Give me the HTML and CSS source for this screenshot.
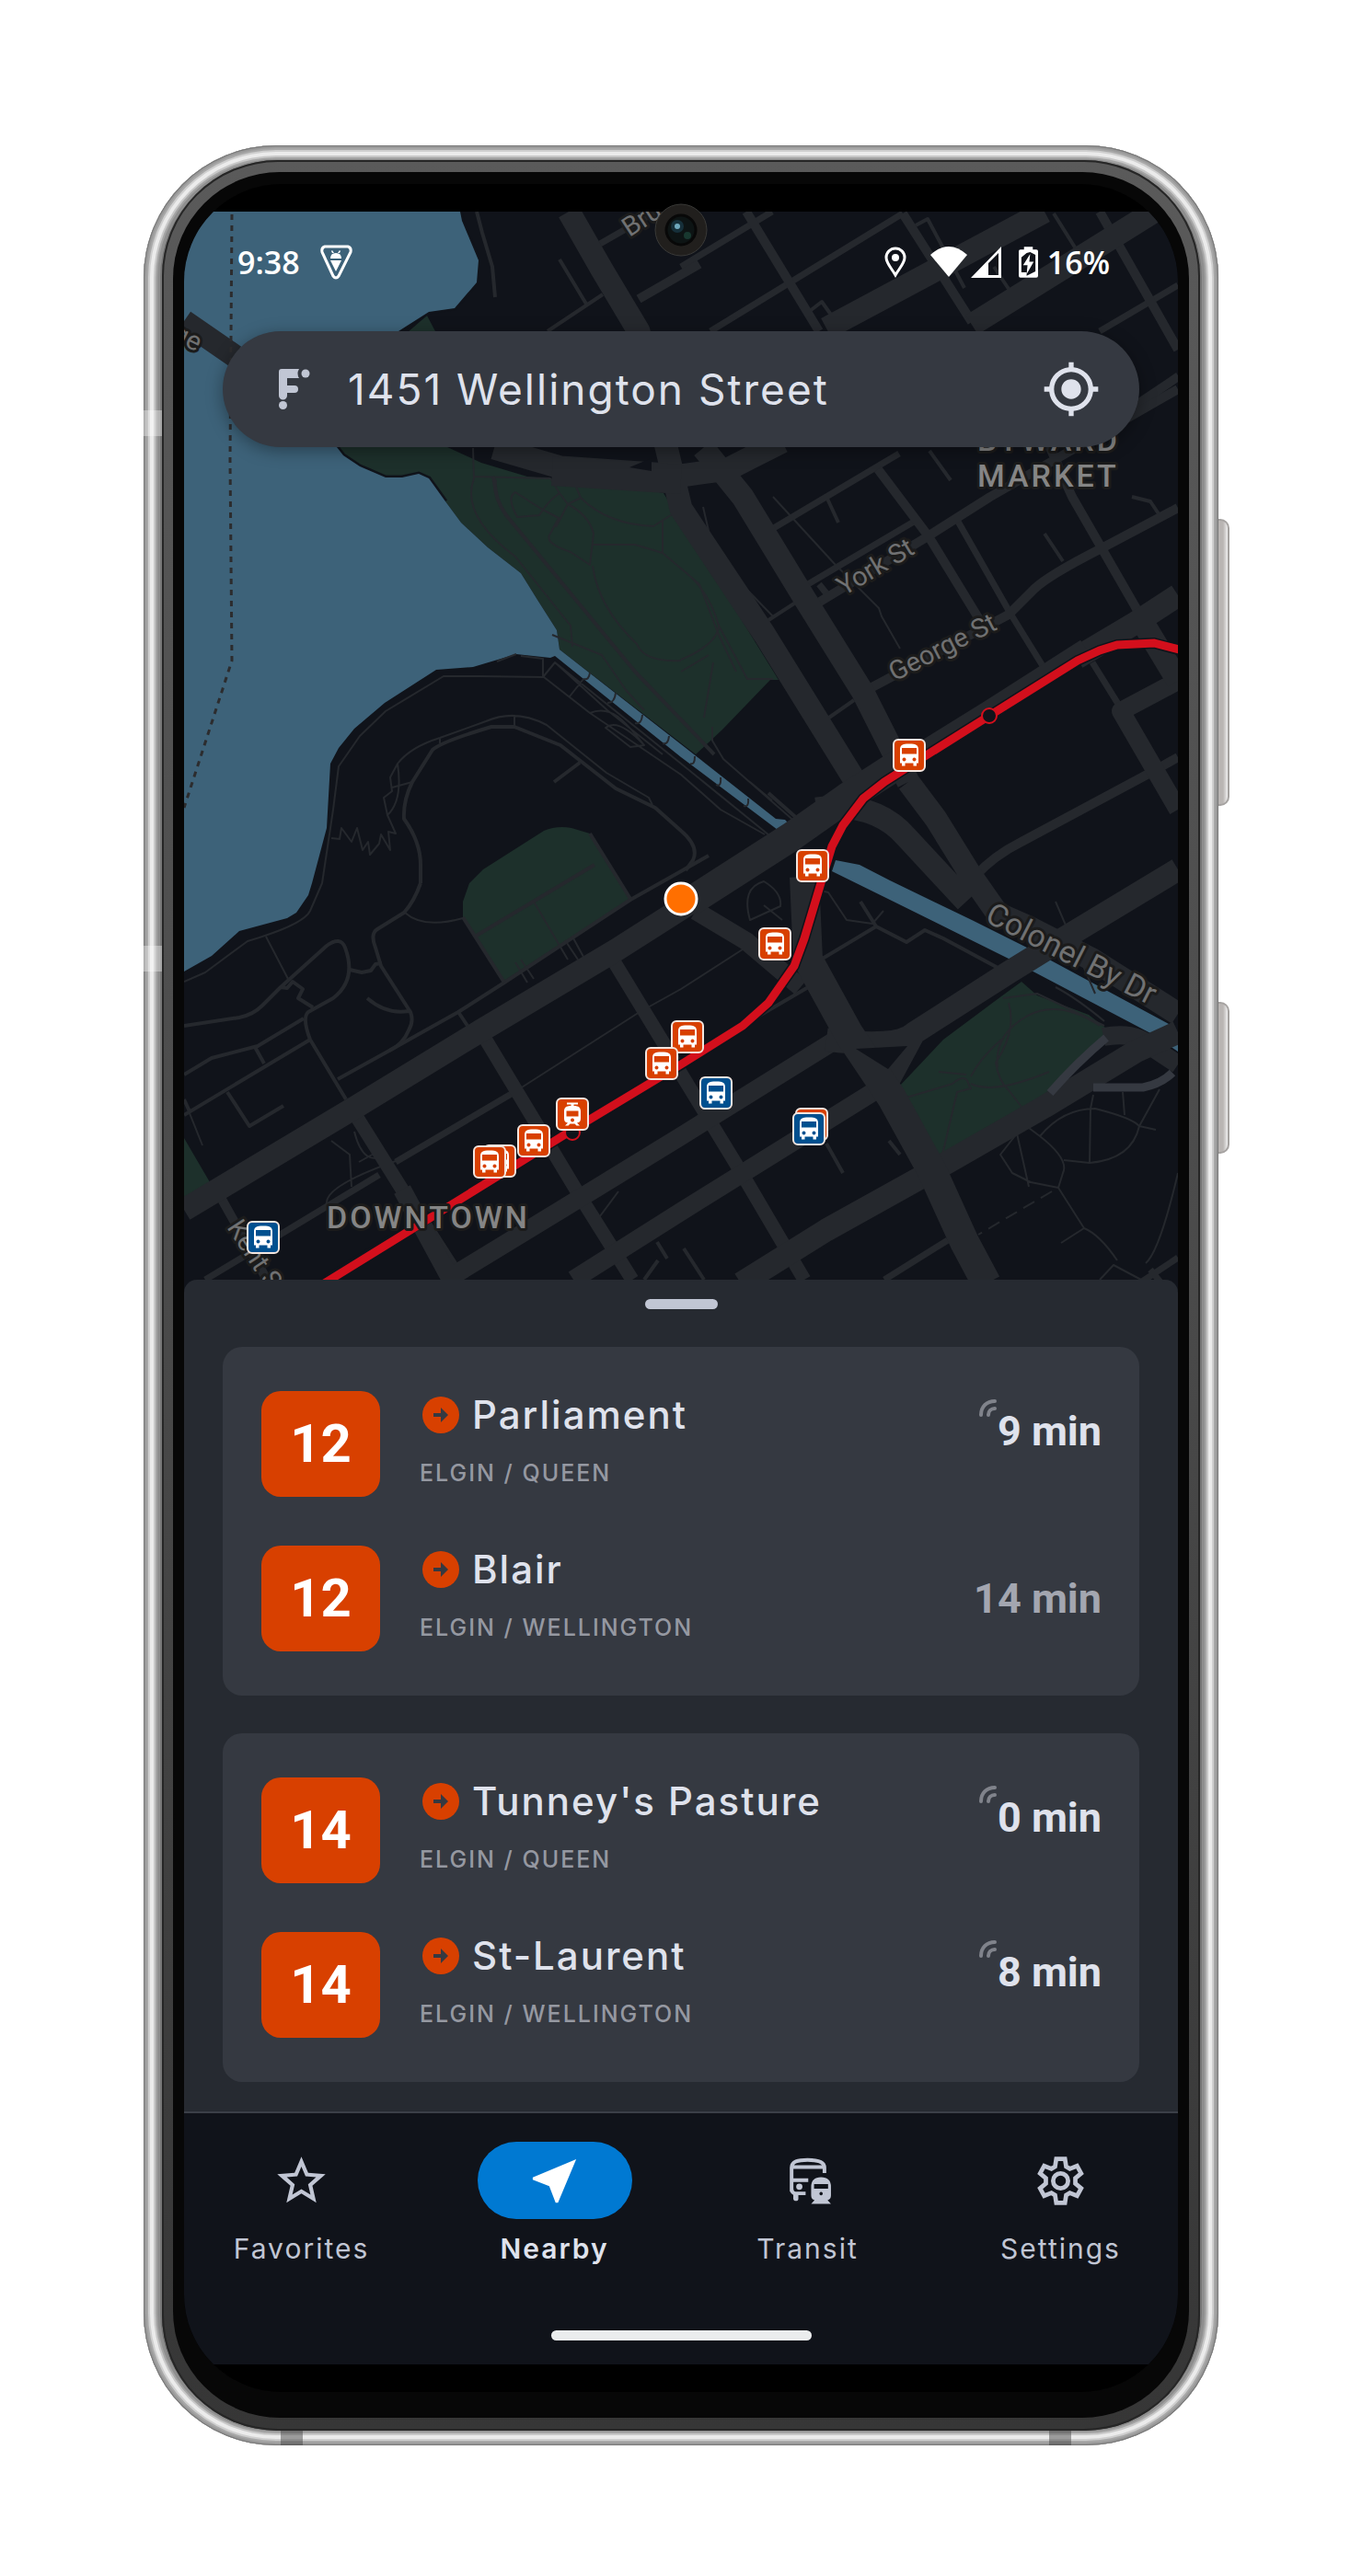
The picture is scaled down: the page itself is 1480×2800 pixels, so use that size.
FILE: index.html
```html
<!DOCTYPE html>
<html lang="en">
<head>
<meta charset="utf-8">
<meta name="viewport" content="width=device-width, initial-scale=1">
<title>Nearby departures</title>
<link rel="stylesheet" href="styles.css">
</head>
<body>
<svg class="defs" aria-hidden="true">
  <symbol id="bus" viewBox="-18 -18 36 36">
    <rect class="plate" x="-17" y="-17" width="34" height="34" rx="5"/>
    <path fill="#fff" fill-rule="evenodd" d="M-10-6C-10-11-8-12.500 0-12.500S10-11 10-6V8.500H8V11.500H4.500V8.500H-4.500V11.500H-8V8.500H-10ZM-8-8V-1.500H8V-8ZM-5.500 2.600a2 2 0 1 0 .01 0ZM5.500 2.600a2 2 0 1 0 .01 0Z"/>
  </symbol>
  <symbol id="tram" viewBox="-18 -18 36 36">
    <rect class="plate" x="-17" y="-17" width="34" height="34" rx="5"/>
    <path fill="#fff" fill-rule="evenodd" d="M-6-12.500H6V-10.500H1.500V-9C7-9 9-7 9-3V5Q9 9 5 9.500L8 12.500H4.500L2.500 10.500H-2.500L-4.500 12.500H-8L-5 9.500Q-9 9-9 5V-3C-9-7-7-9-1.500-9V-10.500H-6ZM-6.500-3.500V2.500H6.500V-3.500ZM0 4.500a2 2 0 1 0 .01 0Z"/>
  </symbol>
  <symbol id="arrow" viewBox="0 0 40 40">
    <circle cx="20" cy="20" r="20" fill="#d84000"/>
    <path fill="#353941" d="M12 18h8v-6l8 8-8 8v-6h-8z"/>
  </symbol>
  <symbol id="live" viewBox="0 0 20 20">
    <path fill="none" stroke="#80838b" stroke-width="4" stroke-linecap="round" d="M2 18C2 9 8 3 17 3M10 18C10 14 13 11 17 11"/>
  </symbol>
</svg>

<main class="phone">
  <span class="side-key volume"></span>
  <span class="side-key power"></span>
  <span class="band band-left-top"></span>
  <span class="band band-left-low"></span>
  <span class="band band-bottom-left"></span>
  <span class="band band-bottom-right"></span>
  <div class="rim">
  <div class="bezel">
  <div class="screen">
    <section class="map-area" aria-label="Map">
      <svg class="map" viewBox="200 230 1080 1173" preserveAspectRatio="xMidYMin slice" role="img" aria-label="Map of downtown Ottawa">
        <path class="park" d="M464 343L474 362H442ZM366 480L373 495 391 507 419 519 437 519 455 515 466 520 484 545 501 568 530 595 566 623 584 652 605 685 608 706 756 820 785 793 837 739H846L740 567 721 536 680 528 573 518 523 503 473 480Z"/>
        <path class="park" d="M510 960L525 945 591 903Q605 897 621 900L641 906 685 977 548 1066 503 997V980ZM200 1237L228 1285 200 1303ZM1110 1067L1127 1082 1183 1103 1201 1117 1199 1130 1137 1190 1021 1257 976 1182 1025 1130 1088 1083Z"/>
        <path class="shore" d="M500 230L502 240 520 283 518 307 494 335 466 339 433 360M366 486L373 495 391 507 419 519 437 519 455 515 466 520 484 545"/>
        <path class="water" d="M500 230L502 240 520 283 518 307 494 335 466 339 433 360 366 486 373 495 391 507 419 519 437 519 455 515 466 520 484 545 501 568 530 595 566 623 584 652 605 685 608 706 740 809 843 890 853 891 859 897 849 905 740 823 603 713 598 715 561 711 514 725 474 728 418 764 385 792 368 813 359 830 355 900 339 960 335 973 322 992 312 998 260 1012 230 1039 200 1056V230Z"/>
        <path class="water" d="M908 935L934 940 967 957 1056 1000 1116 1030 1270 1113 1280 1130V1143L1252 1124 1098 1043 971 980 904 947Z"/>

        <g class="road">
          <g stroke-width="2">
            <path d="M350 960L362 880 368 833 391 800 419 773 482 735H520L591 736 641 775 740 842 783 880 831 907M350 960L337 990Q330 1005 269 1023L223 1057 200 1067M289 1018L313 1064M561 711L540 719M566 713L590 716V736L603 720 740 830 836 908M603 720L660 772 720 820M619 757L634 738M641 775C665 765 680 785 700 810M658 791Q672 780 700 810L685 812Z"/>
            <path d="M360 911L369 912 371 900 382 915 388 900 394 924 400 915 402 929 412 917 414 907 424 924 422 904 430 906 421 886 417 867 426 860 424 845 432 830Q446 812 478 802L528 784Q560 770 594 788L659 840 705 867 709 875M421 886Q438 870 432 830M426 856L448 850M559 777V790M478 802V808"/>
            <path d="M514 487L515 520Q500 560 560 605L620 680 622 703M515 518L598 520 608 536Q595 545 586 560L562 562Q550 540 560 535L588 553 607 563 598 580Q590 590 620 600L641 614 645 580Q640 560 617 548L631 541 622 520M617 548L604 573M608 536L617 548M631 541Q660 570 710 572L732 558M644 592H690L720 601 760 635 781 690 800 730M720 601V565M644 615Q650 660 692 700Q700 720 740 718M600 690L654 712 680 750 700 772M641 731Q640 740 634 738M669 753Q668 764 660 764M698 777Q697 788 690 786M727 800Q726 810 720 808M755 822Q755 832 750 830M783 845Q784 856 778 853M813 868Q814 878 808 876M740 618Q770 640 781 680Q780 700 740 717M781 680L812 738H840M775 720L765 780M740 730L770 712"/>
            <path d="M839 870L815 850M774 790V805L786 825 866 895M764 551L773 590M840 540L906 612 955 661 958 670 978 705M804 633L840 670M815 1000Q805 965 830 958 850 970 848 985ZM860 960L900 970 920 1000 948 1004 960 990M830 984L850 1000M740 1075L810 1030M200 1195L220 1245M385 1230Q395 1270 420 1255M390 1263L408 1253M360 1240L380 1255 382 1290M355 1310Q350 1290 430 1262M440 992Q460 1010 503 998M559 1187L695 1100 740 1075M1147 980L1190 1080"/>
            <path d="M1089 1230L1110 1220 1130 1235Q1162 1260 1155 1275L1150 1291 1120 1285 1100 1275 1087 1255 1105 1232 1118 1290M1130 1235Q1155 1205 1190 1205 1230 1215 1238 1224L1260 1184M1238 1224Q1230 1260 1184 1264L1156 1261M1185 1205L1184 1264M1185 1205L1188 1190M1220 1187L1222 1212M1238 1224L1256 1228M1150 1291L1178 1335 1153 1351M1178 1335Q1195 1342 1214 1370M1280 1275Q1260 1360 1245 1373M1195 1391L1210 1375 1240 1391M1096 1090Q1105 1120 1082 1155 1085 1175 1096 1185L1110 1203M1090 1085L1127 1080 1200 1115M1195 1115Q1150 1085 1115 1105 1080 1125 1084 1160M1088 1130Q1065 1150 1055 1170M1055 1178Q1080 1190 1140 1165M985 1193L1035 1178Q1050 1165 1053 1180L1055 1183 1040 1187 1024 1255M1020 1165L1050 1168M1147 1073Q1170 1085 1200 1110"/>
            <path d="M1143 1295L1063 1342" stroke-dasharray="14 8"/>
            <path d="M646 1330L672 1295M580 980L617 1043"/>
            <path d="M560 1046L573 1068M566 1043L580 1064M614 1022L628 1043M622 1018L634 1040"/>
          </g>
          <g stroke-width="4">
            <path d="M200 1115L260 1106Q275 1103 285 1093L305 1073 355 1028Q370 1017 375 1030 388 1065 362 1085L335 1100Q328 1106 337 1130L376 1195M305 1073L312 1074 318 1067 329 1075 324 1085 340 1095M380 1054L393 1057 403 1055 408 1048 415 1047"/>
            <path d="M457 960V940Q457 915 439 890 438 870 448 850L470 815Q480 806 534 790H559L609 810 669 857 712 878 740 903Q760 920 753 935L745 946M457 960Q450 980 439 992L410 1010Q402 1015 408 1030L414 1050 446 1100Q450 1110 444 1120 438 1135 423 1142M630 829L602 850M399 1085Q420 1103 444 1099"/>
            <path d="M367 1173L423 1142 498 1100 548 1068 685 978 740 947 770 930M498 1100L508 1115M200 1168L230 1150 280 1137 330 1107M200 1212L337 1130M277 1138L287 1156M247 1187L271 1224 308 1202M200 1195L206 1208"/>
            <path d="M518 230L524 253 535 290 538 323M608 282L638 332M595 360L655 320M1135 580L1155 610M899 542L911 568M880 1072L803 1117M892 1043L952 1007 985 1024 1005 1011 1025 1020 1090 1055M952 1007L935 980M835 862L870 893M540 540L536 518M538 521Q536 540 550 560L690 730 776 820M700 1391L715 1370M898 1243L916 1275M966 1240L978 1255M743 1357L765 1391M714 1350L725 1368M503 997L548 1068M516 1018L646 940M641 906L685 977M995 245L1008 238 1048 313M880 338L893 328 910 352M1145 232L1175 280M1010 490L1033 522M1230 540L1250 545 1260 560"/>
            <path d="M1100 320L1080 290M832 676L866 654M898 782L928 761"/>
          </g>
          <g stroke-width="7">
            <path d="M223 1391L412 1277M430 1263L559 1187M961 1391L1030 1348M740 290L839 230M772 360L981 232M1195 360L1280 310M1237 437L1280 408M1195 470L1280 411M839 575L977 493M878 635L993 567M1040 565L1098 667 1135 727M1187 720L1218 770M1238 1395L1280 1367M1250 1380L1262 1395M652 265L713 230M890 635L902 650"/>
          </g>
          <g stroke-width="10">
            <path d="M811 230L890 360M981 232L1056 350M1195 230L1250 327 1280 380M694 325L760 287M886 657L1005 585 1076 540 1280 423M942 750L1096 668 1124 640Q1140 625 1195 597L1280 552M954 510L1009 583 1064 673M1120 440L1165 540 1238 667 1280 745M1060 952Q1080 930 1110 915L1250 840 1280 823M239 1300L290 1391"/>
          </g>
          <g stroke-width="15">
            <path d="M387 1213L437 1293 500 1391M526 1127L630 1300 687 1391M664 1040L723 1137 740 1167 807 1277 874 1391"/>
          </g>
          <g stroke-width="20">
            <path d="M485 1391L498 1383 634 1300 740 1235 920 1123M623 1391L740 1317 960 1180M756 990L811 1023 870 1073M1280 740L1218 773 1280 880M1199 1127Q1235 1120 1254 1140L1280 1157M437 1293L490 1391"/>
          </g>
          <g stroke-width="25">
            <path d="M200 1315L387 1203 523 1120 669 1033 760 975M618 230L654 293 694 360 740 553 831 690 930 850M764 487L807 540 874 650 938 753 987 850M537 487L609 508 740 517 791 510 850 480M898 357L1135 230M1056 353L1254 230M200 349L255 387M1280 1122L1234 1143 1135 1203 1013 1273 898 1337 805 1395M987 850L1017 890 1056 953 1084 993 1116 1007 1187 1043 1280 1102M1280 945L1151 1023 1096 1057 993 1123Q975 1140 898 1130M993 1123L965 1175M1170 715L1234 677 1280 647M1242 677L1280 740M887 879Q950 870 985 910L1050 980"/>
          </g>
          <path stroke-width="32" d="M874 953L878 1043 922 1123 969 1193 1013 1273 1048 1350 1072 1395M750 980L859 910 920 867 985 825M600 512L740 521"/>
          <path stroke-width="22" d="M977 833L1075 772 1180 705"/>
        </g>
        <path class="ramp" d="M1202 1128Q1170 1155 1141 1188M1188 1182H1242Q1262 1178 1274 1166"/>
        <path class="boundary" d="M252 233L250 500 252 718 200 878"/>
        <path class="block" d="M684 508L708 498V512ZM930 1140L986 1137 965 1162Z"/>

        <path class="line-casing" d="M355 1391L619 1230 740 1157 807 1115 835 1090 863 1050 874 1020 886 980 894 953 904 920 916 897 938 868 961 850 997 827 1075 778 1171 718 1195 707 1214 701 1254 699 1280 706"/>
        <path class="line" d="M349 1397L619 1230 740 1157 807 1115 835 1090 863 1050 874 1020 886 980 894 953 904 920 916 897 938 868 961 850 997 827 1075 778 1171 718 1195 707 1214 701 1254 699 1285 707"/>
        <circle class="station" cx="1075" cy="778" r="8"/>
        <circle class="station" cx="622" cy="1231" r="8"/>

        <g class="street">
          <text transform="translate(684 258) rotate(-33)">Bru</text>
          <text transform="translate(185 368) rotate(27)">ge</text>
          <text transform="translate(917 648) rotate(-31)">York St</text>
          <text transform="translate(972 741) rotate(-27)">George St</text>
          <text class="wide" transform="translate(1069 1001) rotate(27)">Colonel By Dr</text>
          <text transform="translate(246 1334) rotate(57)">Kent St</text>
        </g>
        <g class="district">
          <text x="1062" y="490">BYWARD</text>
          <text x="1062" y="529">MARKET</text>
          <text x="355" y="1335">DOWNTOWN</text>
        </g>

        <circle class="me" cx="740" cy="977" r="17"/>
        <g class="stop orange">
          <use href="#bus" x="970" y="803" width="36" height="36"/>
          <use href="#bus" x="865" y="923" width="36" height="36"/>
          <use href="#bus" x="824" y="1008" width="36" height="36"/>
          <use href="#bus" x="729" y="1109" width="36" height="36"/>
          <use href="#bus" x="701" y="1138" width="36" height="36"/>
          <use href="#tram" x="604" y="1193" width="36" height="36"/>
          <use href="#bus" x="562" y="1222" width="36" height="36"/>
          <use href="#bus" x="525" y="1244" width="36" height="36"/>
          <use href="#bus" x="514" y="1245" width="36" height="36"/>
          <use href="#bus" x="864" y="1204" width="36" height="36"/>
        </g>
        <g class="stop blue">
          <use href="#bus" x="760" y="1170" width="36" height="36"/>
          <use href="#bus" x="861" y="1209" width="36" height="36"/>
          <use href="#bus" x="268" y="1327" width="36" height="36"/>
        </g>
      </svg>

      <header class="status">
        <div class="status-group">
          <time>9:38</time>
          <svg class="debug" viewBox="0 0 35 38" aria-hidden="true"><path fill="none" stroke="#fff" stroke-width="3" stroke-linejoin="round" d="M5 2H30Q34 3 33 8L20 34Q17 38 14 34L2 8Q1 3 5 2Z"/><path fill="#fff" d="M11 15Q11 9 17 9t6 6ZM11 17H23L17 29ZM12 7l1-1 2 3H13ZM22 7l-1-1-2 3h2Z"/></svg>
        </div>
        <div class="status-group right">
          <svg class="pin" viewBox="0 0 24 34" aria-hidden="true"><path fill="none" stroke="#fff" stroke-width="3" d="M12 31C8 24 2 18 2 12A10 10 0 0 1 22 12C22 18 16 24 12 31Z"/><circle cx="12" cy="12" r="4" fill="#fff"/></svg>
          <svg class="radio" viewBox="0 0 78 36" aria-hidden="true"><path fill="#fff" d="M0 10Q20-8 40 10L20 34Z"/><path fill="#fff" fill-rule="evenodd" d="M44 35L77 1V35ZM63 19V32H74V8Z"/></svg>
          <svg class="battery" viewBox="0 0 22 35" aria-hidden="true"><path fill="#fff" d="M6 0h10v3h4q2 0 2 2v28q0 2-2 2H2q-2 0-2-2V5q0-2 2-2h4z"/><path fill="#10131a" d="M13 6L19 9V28L9 33V29H3V12L9 7Z"/><path fill="#fff" d="M13 8L5 21h5L9 31l8-14h-5Z"/></svg>
          <span>16%</span>
        </div>
      </header>

      <form class="search">
        <svg class="brand" viewBox="0 0 34 44" aria-hidden="true"><path fill="#c1c6d4" d="M3 0H22Q19 5 22 10H9V18H17A4 4 0 0 1 17 26H9V29A4.500 4.500 0 0 1 0 29V3Q0 0 3 0Z"/><circle cx="29" cy="5" r="4.500" fill="#c1c6d4"/><circle cx="4.500" cy="39.500" r="4.500" fill="#c1c6d4"/></svg>
        <input class="address" type="text" value="1451 Wellington Street" aria-label="Address">
        <button class="locate" type="button" aria-label="Use my location"><svg viewBox="0 0 24 24" aria-hidden="true"><path fill="#dfe2ec" d="M12 8c-2.210 0-4 1.790-4 4s1.790 4 4 4 4-1.790 4-4-1.790-4-4-4zm8.940 3A8.994 8.994 0 0 0 13 3.060V1h-2v2.060A8.994 8.994 0 0 0 3.060 11H1v2h2.060A8.994 8.994 0 0 0 11 20.940V23h2v-2.060A8.994 8.994 0 0 0 20.940 13H23v-2h-2.060zM12 19c-3.870 0-7-3.130-7-7s3.130-7 7-7 7 3.130 7 7-3.130 7-7 7z"/></svg></button>
      </form>
    </section>

    <section class="sheet" aria-label="Departures">
      <div class="handle"></div>
      <ul class="card">
        <li class="trip"><span class="badge">12</span><div class="info"><h2 class="dest"><svg aria-hidden="true"><use href="#arrow"/></svg>Parliament</h2><p class="stop-name">ELGIN / QUEEN</p></div><div class="due live"><svg aria-hidden="true"><use href="#live"/></svg><span>9 min</span></div></li>
        <li class="trip"><span class="badge">12</span><div class="info"><h2 class="dest"><svg aria-hidden="true"><use href="#arrow"/></svg>Blair</h2><p class="stop-name">ELGIN / WELLINGTON</p></div><div class="due"><span>14 min</span></div></li>
      </ul>
      <ul class="card">
        <li class="trip"><span class="badge">14</span><div class="info"><h2 class="dest"><svg aria-hidden="true"><use href="#arrow"/></svg>Tunney's Pasture</h2><p class="stop-name">ELGIN / QUEEN</p></div><div class="due live"><svg aria-hidden="true"><use href="#live"/></svg><span>0 min</span></div></li>
        <li class="trip"><span class="badge">14</span><div class="info"><h2 class="dest"><svg aria-hidden="true"><use href="#arrow"/></svg>St-Laurent</h2><p class="stop-name">ELGIN / WELLINGTON</p></div><div class="due live"><svg aria-hidden="true"><use href="#live"/></svg><span>8 min</span></div></li>
      </ul>
    </section>

    <footer class="bottom">
      <nav class="tabs">
        <a class="tab" href="#favorites"><span class="pill"><svg viewBox="0 0 24 24" aria-hidden="true"><path fill="currentColor" d="M22 9.240l-7.190-.62L12 2 9.190 8.630 2 9.240l5.460 4.730L5.820 21 12 17.270 18.180 21l-1.630-7.030L22 9.240zM12 15.400l-3.760 2.270 1-4.280-3.320-2.880 4.380-.38L12 6.100l1.710 4.040 4.380.38-3.320 2.880 1 4.280L12 15.400z"/></svg></span>Favorites</a>
        <a class="tab active" href="#nearby" aria-current="page"><span class="pill"><svg viewBox="0 0 24 24" aria-hidden="true"><path fill="#fff" d="M21 3L3 10.530v.98l6.840 2.650L12.480 21h.98L21 3z"/></svg></span>Nearby</a>
        <a class="tab" href="#transit"><span class="pill"><svg viewBox="0 0 24 24" aria-hidden="true"><path fill="none" stroke="currentColor" stroke-width="1.500" d="M5.400 16.500V6.500C5.400 4 8 3.300 12 3.300s7 .7 7 3.200V8.800M5.400 6.300H19M5.400 11.700H12.300M5.400 15Q5.400 17 7 17.200H11.200"/><path fill="currentColor" d="M6.100 17H8.200V19.300Q8.200 20.300 7.200 20.300T6.100 19.300Z"/><circle cx="8.600" cy="14.400" r="1.300" fill="currentColor"/><path fill="currentColor" fill-rule="evenodd" d="M13.500 14.500Q13.500 10.500 17.600 10.500T21.700 14.500V18Q21.700 19.600 20.300 20L21.700 21.500H13.500L14.900 20Q13.500 19.600 13.500 18ZM14.700 13.300V15.200H20.500V13.300ZM17.600 16.600a.7.7 0 1 0 .01 0Z"/></svg></span>Transit</a>
        <a class="tab" href="#settings"><span class="pill"><svg viewBox="0 0 24 24" aria-hidden="true"><path fill="none" stroke="currentColor" stroke-width="1.800" d="M10.200 2.900h3.600l.5 3.200 1.500.9 3-1.200 1.700 3.100-2.400 2v2.200l2.400 2-1.700 3.100-3-1.200-1.500.9-.5 3.200h-3.600l-.5-3.200-1.500-.9-3 1.200-1.700-3.100 2.400-2v-2.200l-2.400-2 1.700-3.100 3 1.200 1.500-.9z"/><circle cx="12" cy="12" r="3.100" fill="none" stroke="currentColor" stroke-width="1.800"/></svg></span>Settings</a>
      </nav>
      <div class="home-bar"></div>
    </footer>
    <svg class="camera" viewBox="0 0 58 58" aria-hidden="true"><circle cx="29" cy="29" r="28" fill="#211f1d" stroke="#3a3a38"/><circle cx="29" cy="29" r="16" fill="#0d1414" stroke="#080808" stroke-width="3"/><circle cx="25" cy="25" r="7" fill="#16303a"/><circle cx="25" cy="25" r="3" fill="#6fa9bd"/><circle cx="36" cy="35" r="4" fill="#18382f"/></svg>
  </div>
  </div>
  </div>
</main>
</body>
</html>
```
FILE: styles.css
```css
* { box-sizing: border-box; }

body {
  margin: 0;
  padding: 158px 24px 142px;
  background: #fff;
  color: #dfe2ec;
  font-family: Inter, "Noto Sans", sans-serif;
}

h2, p, ul { margin: 0; padding: 0; }
ul { list-style: none; }
.defs { position: absolute; width: 0; height: 0; }

/* Device body */
.phone {
  position: relative;
  max-width: 1168px;
  margin: 0 auto;
  padding: 16px 20px;
  border-radius: 144px;
  background: #777;
  box-shadow:
    inset 0 0 0 1px #777,
    inset 0 0 0 3px #999,
    inset 0 0 0 5px #a8a8a8,
    inset 0 0 0 7px #cfcfcf,
    inset 0 0 0 11px #ebebeb,
    inset 0 0 0 13px #c8c8c8,
    inset 0 0 0 15px #a4a4a4,
    inset 0 0 0 18px #8e8e8e;
}

.rim {
  padding: 13px 12px 14px;
  border-radius: 126px;
  background: linear-gradient(#5a5a5a, #4a4a4a 50%, #363636);
  box-shadow: inset 0 0 0 2px #262626;
}

.bezel {
  padding: 13px 12px 28px;
  border-radius: 116px;
  background: #070707;
}

.screen {
  position: relative;
  overflow: hidden;
  padding: 30px 0;
  border-radius: 106px;
  background: #000;
}

.side-key {
  position: absolute;
  left: 100%;
  width: 12px;
  border: 2px solid #a5a2a0;
  border-left: 0;
  border-radius: 0 10px 10px 0;
  background: linear-gradient(90deg, #b9b5b3 50%, #efefef);
}
.volume { top: 406px; height: 312px; }
.power { top: 931px; height: 165px; }

.band { position: absolute; background: rgba(255, 255, 255, .35); }
.band-left-top, .band-left-low { left: 0; width: 20px; height: 28px; }
.band-left-top { top: 288px; }
.band-left-low { top: 870px; }
.band-bottom-left, .band-bottom-right { bottom: 0; width: 24px; height: 16px; background: rgba(60, 60, 60, .45); }
.band-bottom-left { left: 149px; }
.band-bottom-right { right: 160px; }

.camera {
  position: absolute;
  top: 21px;
  left: 50%;
  width: 58px;
  height: 58px;
  margin-left: -29px;
}

/* Map */
.map-area {
  position: relative;
  min-height: 1173px;
  background: #10131a;
}

.map { position: absolute; width: 100%; height: 100%; }
.park { fill: #1d302b; }
.water { fill: #3d6279; }
.shore { fill: none; stroke: #10131a; stroke-width: 5; }
.block { fill: #10131a; }
.road { fill: none; stroke: #25282d; stroke-linejoin: round; }
.ramp { fill: none; stroke: #353941; stroke-width: 9; }
.boundary { fill: none; stroke: #2c2c2e; stroke-width: 3; stroke-dasharray: 6 6; }
.line-casing { fill: none; stroke: #10131a; stroke-width: 12; }
.line { fill: none; stroke: #d30f1c; stroke-width: 9; }
.station { fill: #10131a; stroke: #d30f1c; stroke-width: 2; }
.me { fill: #ff6f00; stroke: #fff; stroke-width: 3; }
.plate { stroke: #f3e6e0; stroke-width: 2; }
.orange { fill: #d84000; }
.blue { fill: #00508f; }

.street, .district {
  font-family: Roboto, "Noto Sans", sans-serif;
  stroke: #1b1b1b;
  stroke-width: 6;
  stroke-linejoin: round;
  paint-order: stroke;
}
.street { font-size: 29px; fill: #707172; }
.street .wide { font-size: 34px; }
.district { font-size: 34px; font-weight: 500; letter-spacing: 3px; fill: #858585; }

.status {
  position: relative;
  display: flex;
  justify-content: space-between;
  padding: 30px 74px 0 58px;
  color: #fff;
  font: 600 34px/50px "Open Sans", sans-serif;
}
.status-group { display: flex; align-items: center; gap: 22px; }
.right { gap: 10px; }
.debug { width: 35px; height: 38px; }
.pin { width: 24px; height: 40px; margin-right: 16px; }
.radio { width: 78px; height: 40px; }
.battery { width: 21px; height: 40px; margin-left: 8px; }

.search {
  position: relative;
  display: flex;
  align-items: center;
  height: 126px;
  margin: 50px 42px 0;
  padding: 0 42px 0 61px;
  border-radius: 63px;
  background: #353941;
  box-shadow: 0 4px 18px rgba(0, 0, 0, .35);
}
.brand { width: 34px; height: 44px; margin-right: 41px; }
.address {
  flex: 1;
  min-width: 0;
  padding: 0;
  border: 0;
  background: none;
  color: inherit;
  font: 400 46px/60px Inter, sans-serif;
  letter-spacing: 2px;
}
.locate { padding: 0; border: 0; background: none; }
.locate svg { display: block; width: 64px; height: 64px; }

/* Departures */
.sheet {
  position: relative;
  display: flex;
  flex-direction: column;
  gap: 41px;
  margin-top: -12px;
  padding: 21px 42px 32px;
  border-radius: 14px 14px 0 0;
  background: #262a31;
}
.handle {
  align-self: center;
  width: 79px;
  height: 11px;
  border-radius: 6px;
  background: #c1c6d4;
}
.card {
  display: flex;
  flex-direction: column;
  gap: 53px;
  padding: 48px 41px 48px 42px;
  border-radius: 21px;
  background: #353941;
}
.trip { display: flex; align-items: center; }
.badge {
  width: 129px;
  border-radius: 21px;
  background: #d84000;
  color: #fff;
  font: 700 58px/115px Roboto, sans-serif;
  text-align: center;
}
.info { flex: 1; align-self: flex-start; padding-left: 43px; }
.dest {
  display: flex;
  align-items: center;
  gap: 14px;
  padding-left: 3px;
  font-size: 42px;
  font-weight: 500;
  line-height: 52px;
  letter-spacing: 2px;
}
.dest svg { width: 40px; height: 40px; }
.stop-name {
  padding-top: 20px;
  color: #9598a1;
  font-size: 25px;
  font-weight: 500;
  line-height: 34px;
  letter-spacing: 2px;
}
.due { color: #a3a6b0; font: 700 45px/52px Roboto, sans-serif; }
.live { display: flex; align-self: flex-start; padding-top: 8px; color: #dfe2ec; }
.live svg { width: 20px; height: 20px; }
.live span { padding-top: 10px; }

/* Bottom navigation */
.bottom {
  padding: 31px 0 26px;
  border-top: 2px solid #3b3f48;
  background: #10131a;
}
.tabs { display: flex; gap: 20px; }
.tab {
  display: flex;
  flex: 1;
  flex-direction: column;
  align-items: center;
  gap: 12px;
  color: #c1c6d4;
  font-size: 30px;
  line-height: 40px;
  letter-spacing: 2px;
  text-decoration: none;
}
.pill {
  display: grid;
  place-items: center;
  width: 168px;
  height: 84px;
  border-radius: 42px;
}
.pill svg { width: 63px; height: 63px; }
.active { color: #dfe2ec; font-weight: 600; }
.active .pill { background: #0079d2; }
.home-bar {
  width: 283px;
  height: 11px;
  margin: 69px auto 0;
  border-radius: 6px;
  background: #ebedee;
}
```
